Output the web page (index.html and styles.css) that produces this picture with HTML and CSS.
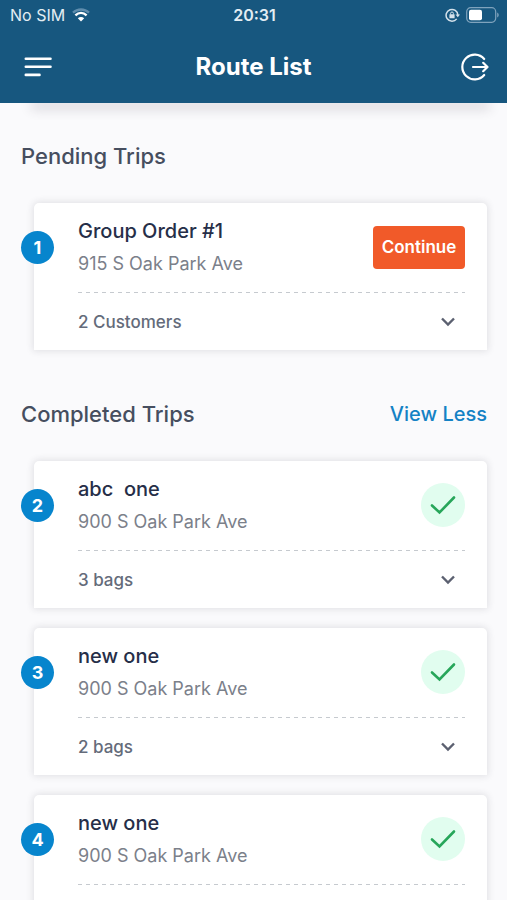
FILE: index.html
```html
<!doctype html>
<html lang="en">
<head>
    <meta charset="UTF-8">
    <meta name="viewport" content="width=device-width, initial-scale=1.0">
    <title>Route List</title>
    <link rel="stylesheet" href="styles.css">
</head>
<body>
<div class="screen">
    <header class="header">
        <div class="status">
            <div class="carrier">
                <span>No SIM</span>
                <svg width="20" height="14" viewBox="0 0 20 14" fill="none">
                    <path d="M2 4.7C6.5 .4 13.5 .4 18 4.7" stroke="#5f8dad" stroke-width="2.3"/>
                    <path d="M4.4 7.3C7.7 4.3 12.3 4.3 15.6 7.3" stroke="#fff" stroke-width="2.4"/>
                    <path d="M10 13.5L6.8 10.2C8.6 8.5 11.4 8.5 13.2 10.2Z" fill="#fff"/>
                </svg>
            </div>
            <div class="time">20:31</div>
            <div class="power">
                <svg width="15" height="14" viewBox="0 0 15 14" fill="none">
                    <path d="M11.7 10.9A5.9 5.9 0 1 1 12.9 7" stroke="#d5e2eb" stroke-width="1.5"/>
                    <path d="M10.5 6.5H15L12.8 9.3Z" fill="#d5e2eb"/>
                    <rect x="4.4" y="6.2" width="5.2" height="4" rx=".5" fill="#d5e2eb"/>
                    <path d="M5.6 6.5V5.4a1.4 1.4 0 0 1 2.8 0V6.5" stroke="#d5e2eb"/>
                </svg>
                <svg width="33" height="16" viewBox="0 0 33 16" fill="none">
                    <rect x=".7" y=".7" width="29" height="14.6" rx="4" stroke="#7fa3bd" stroke-width="1.2"/>
                    <rect x="3" y="2.7" width="13" height="10.6" rx="2" fill="#fff"/>
                    <path d="M31.2 5.5C33.2 6.5 33.2 9.5 31.2 10.5Z" fill="#7fa3bd"/>
                </svg>
            </div>
        </div>
        <div class="bar">
            <button class="icon-btn" type="button" aria-label="Menu">
                <svg width="28" height="20" viewBox="0 0 28 20" stroke="#fff" stroke-width="2.6" stroke-linecap="round">
                    <path d="M1.8 1.7H26.5M1.8 9.7H26.5M1.8 17.9H15.5"/>
                </svg>
            </button>
            <h1 class="title">Route List</h1>
            <button class="icon-btn" type="button" aria-label="Log out">
                <svg width="28" height="28" viewBox="0 0 28 28" fill="none" stroke="#fff" stroke-width="2.2" stroke-linecap="round" stroke-linejoin="round">
                    <path d="M23.2 6A12.4 12.4 0 1 0 23.2 22"/>
                    <path d="M12 14H26.5M22.2 9.8L26.5 14L22.2 18.2"/>
                </svg>
            </button>
        </div>
    </header>

    <main class="content">
        <div class="card-edge"></div>

        <section class="section">
            <div class="section-head">
                <h2>Pending Trips</h2>
            </div>
            <article class="card">
                <span class="badge">1</span>
                <div class="card-top">
                    <div class="info">
                        <h3>Group Order #1</h3>
                        <p>915 S Oak Park Ave</p>
                    </div>
                    <button class="continue" type="button">Continue</button>
                </div>
                <button class="more" type="button">
                    <span>2 Customers</span>
                    <svg width="16" height="10" viewBox="0 0 16 10"><path d="M2 1.5L8 7.5L14 1.5"/></svg>
                </button>
            </article>
        </section>

        <section class="section">
            <div class="section-head">
                <h2>Completed Trips</h2>
                <a href="#">View Less</a>
            </div>
            <article class="card">
                <span class="badge">2</span>
                <div class="card-top">
                    <div class="info">
                        <h3>abc&nbsp; one</h3>
                        <p>900 S Oak Park Ave</p>
                    </div>
                    <span class="done">
                        <svg width="26" height="20" viewBox="0 0 26 20"><path d="M2 10.5L9.5 17.5L24 2.5"/></svg>
                    </span>
                </div>
                <button class="more" type="button">
                    <span>3 bags</span>
                    <svg width="16" height="10" viewBox="0 0 16 10"><path d="M2 1.5L8 7.5L14 1.5"/></svg>
                </button>
            </article>
            <article class="card">
                <span class="badge">3</span>
                <div class="card-top">
                    <div class="info">
                        <h3>new one</h3>
                        <p>900 S Oak Park Ave</p>
                    </div>
                    <span class="done">
                        <svg width="26" height="20" viewBox="0 0 26 20"><path d="M2 10.5L9.5 17.5L24 2.5"/></svg>
                    </span>
                </div>
                <button class="more" type="button">
                    <span>2 bags</span>
                    <svg width="16" height="10" viewBox="0 0 16 10"><path d="M2 1.5L8 7.5L14 1.5"/></svg>
                </button>
            </article>
            <article class="card">
                <span class="badge">4</span>
                <div class="card-top">
                    <div class="info">
                        <h3>new one</h3>
                        <p>900 S Oak Park Ave</p>
                    </div>
                    <span class="done">
                        <svg width="26" height="20" viewBox="0 0 26 20"><path d="M2 10.5L9.5 17.5L24 2.5"/></svg>
                    </span>
                </div>
                <button class="more" type="button" aria-label="Show bags">
                    <span></span>
                    <svg width="16" height="10" viewBox="0 0 16 10"><path d="M2 1.5L8 7.5L14 1.5"/></svg>
                </button>
            </article>
        </section>
    </main>
</div>
</body>
</html>
```
FILE: styles.css
```css
*{
    margin: 0;
    padding: 0;
    box-sizing: border-box;
}
body{
    font-family: Inter, "Liberation Sans", sans-serif;
    background-color: #fafafc;
}
button{
    border: none;
    background: none;
    font-family: inherit;
    cursor: pointer;
}
svg{
    display: block;
}
.screen{
    height: 100vh;
    display: flex;
    flex-direction: column;
}
/* header */
.header{
    flex: none;
    background-color: #17577f;
    color: #fff;
}
.status{
    height: 30px;
    padding: 0 8px 0 10px;
    display: grid;
    grid-template-columns: 1fr auto 1fr;
    align-items: center;
    font-size: 16px;
    color: #e3edf3;
}
.carrier{
    display: flex;
    align-items: center;
    gap: 6px;
}
.time{
    font-weight: 600;
}
.power{
    display: flex;
    justify-content: flex-end;
    align-items: center;
    gap: 6px;
}
.bar{
    height: 73px;
    padding: 0 18px;
    display: grid;
    grid-template-columns: 1fr auto 1fr;
    align-items: center;
}
.icon-btn{
    justify-self: start;
    padding-left: 6px;
}
.icon-btn:last-child{
    justify-self: end;
}
.title{
    font-size: 24px;
    font-weight: 700;
}
/* list */
.content{
    flex: 1;
    padding: 0 20px 20px 21px;
    overflow-y: auto;
    scrollbar-width: none;
}
.card-edge{
    height: 1px;
    margin: -1px 0 39px 13px;
    box-shadow: 0 3px 12px 3px rgba(60, 50, 70, 0.2);
}
.section{
    margin-bottom: 50px;
}
.section-head{
    display: flex;
    justify-content: space-between;
    align-items: center;
    margin-bottom: 33px;
    line-height: 28px;
}
.section-head h2{
    font-size: 22px;
    font-weight: 500;
    color: #464e5f;
}
.section-head a{
    font-size: 20px;
    font-weight: 500;
    color: #1482c5;
    text-decoration: none;
}
.card{
    position: relative;
    margin: 0 0 20px 13px;
    padding: 0 22px 0 44px;
    background-color: #fff;
    border-radius: 5px 5px 0 0;
    box-shadow: 0 0 7px 1px rgba(50, 50, 60, 0.13);
}
.badge{
    position: absolute;
    top: 28px;
    left: -13px;
    width: 33px;
    height: 33px;
    border-radius: 50%;
    background-color: #0785cd;
    color: #fff;
    font-size: 18px;
    font-weight: 700;
    line-height: 33px;
    text-align: center;
}
.card-top{
    display: flex;
    justify-content: space-between;
    align-items: center;
    height: 90px;
    padding-bottom: 2px;
    background: repeating-linear-gradient(90deg, #c6cacf 0 4px, transparent 4px 8px) left bottom / 100% 1px no-repeat;
}
.info{
    display: flex;
    flex-direction: column;
    gap: 9px;
    line-height: 24px;
}
.info h3{
    font-size: 20px;
    font-weight: 500;
    color: #262e48;
}
.info p{
    font-size: 18px;
    color: #7b808a;
}
.continue{
    width: 92px;
    height: 43px;
    border-radius: 4px;
    background-color: #f15a29;
    color: #fff;
    font-size: 17px;
    font-weight: 600;
}
.done{
    width: 44px;
    height: 44px;
    border-radius: 50%;
    background-color: #e1fdef;
    display: flex;
    justify-content: center;
    align-items: center;
}
.done path{
    fill: none;
    stroke: #27a65a;
    stroke-width: 2.6;
    stroke-linecap: round;
}
.more{
    width: 100%;
    height: 57px;
    padding-right: 9px;
    display: flex;
    justify-content: space-between;
    align-items: center;
    font-size: 17px;
    font-weight: 500;
    color: #646b7a;
}
.more path{
    fill: none;
    stroke: #5b6070;
    stroke-width: 2.4;
}
```
